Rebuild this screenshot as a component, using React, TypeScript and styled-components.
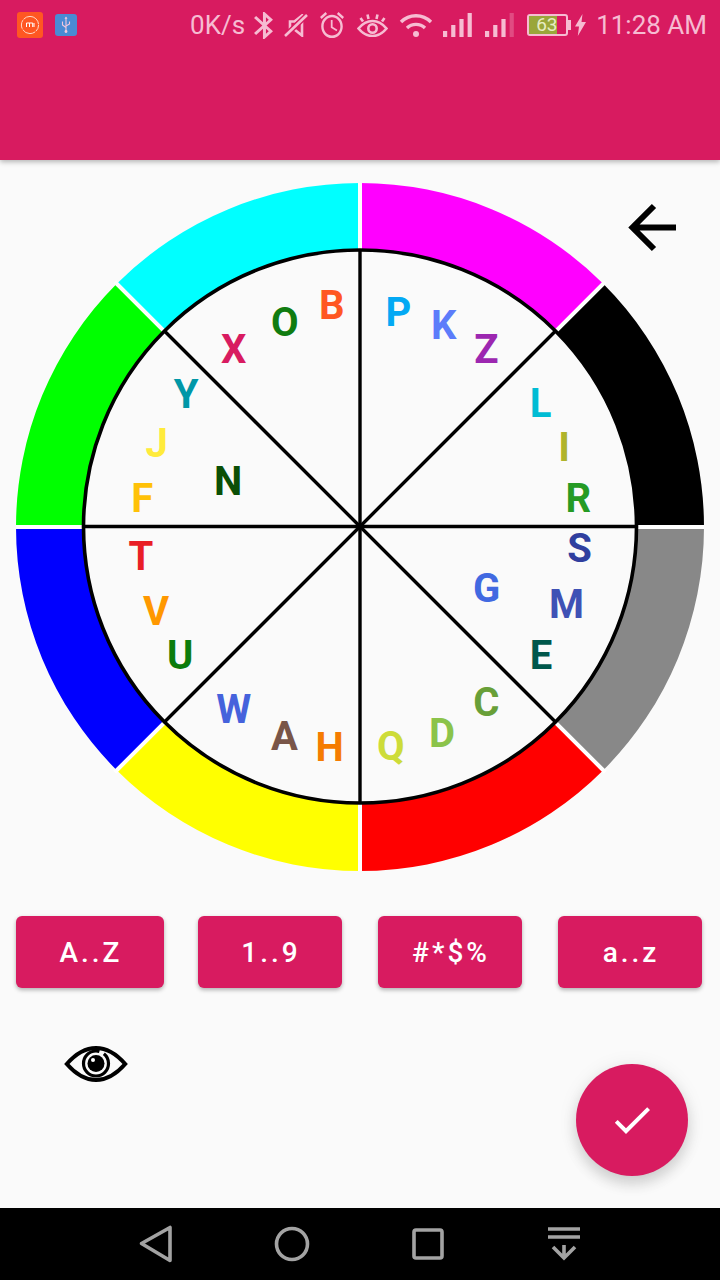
import React from "react";
import styled, { createGlobalStyle } from "styled-components";

const Global = createGlobalStyle`
  html, body { margin: 0; padding: 0; background: #fafafa; }
  * { box-sizing: border-box; }
  body { font-family: Roboto, "Liberation Sans", sans-serif; }
`;

const PINK = "#d81b60";
const STATUS = "#f6bcd2";

const Page = styled.div`
  width: 720px;
  height: 1280px;
  display: flex;
  flex-direction: column;
  background: #fafafa;
  overflow: hidden;
`;
const Header = styled.header`
  height: 160px;
  flex: none;
  background: ${PINK};
  box-shadow: 0 2px 5px rgba(0, 0, 0, 0.28);
  position: relative;
  z-index: 1;
`;
const StatusBar = styled.div`
  height: 50px;
  display: flex;
  align-items: center;
  padding: 0 13px 0 17px;
  color: ${STATUS};
`;
const StatusRight = styled.div`
  margin-left: auto;
  display: flex;
  align-items: center;
`;
const StatusText = styled.span<{ $ml?: number }>`
  font-size: 26px;
  line-height: 30px;
  margin-left: ${(p) => p.$ml ?? 0}px;
  white-space: nowrap;
`;
const Glyph = styled.svg<{ $ml?: number }>`
  display: block;
  flex: none;
  margin-left: ${(p) => p.$ml ?? 0}px;
`;
const Battery = styled.div`
  position: relative;
  width: 41px;
  height: 22px;
  margin-left: 13px;
  border: 2px solid ${STATUS};
  border-radius: 3px;
  &::after {
    content: "";
    position: absolute;
    right: -5px;
    top: 4px;
    width: 3px;
    height: 10px;
    background: ${STATUS};
  }
`;
const BatteryFill = styled.div`
  height: 100%;
  width: 28px;
  background: #9aa63a;
`;
const BatteryText = styled.span`
  position: absolute;
  left: 7px;
  top: -1px;
  font-size: 19px;
  line-height: 20px;
  color: #e8ecc4;
`;

const Main = styled.main`
  flex: 1;
  position: relative;
`;
const Wheel = styled.div`
  position: relative;
  width: 688px;
  height: 688px;
  margin: 23px 0 0 16px;
`;
const WheelArt = styled.svg`
  display: block;
`;
const Letter = styled.span<{ $x: number; $y: number; $c: string }>`
  position: absolute;
  left: ${(p) => p.$x - 16}px;
  top: ${(p) => p.$y - 183 + 1.2}px;
  transform: translate(-50%, -50%);
  font-size: 40px;
  line-height: 1;
  font-weight: 700;
  color: ${(p) => p.$c};
`;
const BackArrow = styled.svg`
  position: absolute;
  left: 624px;
  top: 40px;
`;
const ButtonRow = styled.div`
  display: flex;
  margin: 45px 0 0 16px;
`;
const KeyButton = styled.button<{ $w: number; $ml?: number }>`
  width: ${(p) => p.$w}px;
  height: 72px;
  margin-left: ${(p) => p.$ml ?? 0}px;
  border: 0;
  border-radius: 6px;
  background: ${PINK};
  color: #fff;
  font-family: Roboto, sans-serif;
  font-size: 28px;
  font-weight: 500;
  letter-spacing: 3px;
  box-shadow: 0 2px 4px rgba(0, 0, 0, 0.3);
  padding: 0 0 0 2px;
`;
const BottomRow = styled.div`
  display: flex;
  justify-content: space-between;
  align-items: flex-start;
  padding: 58px 32px 0 64px;
`;
const Fab = styled.button`
  width: 112px;
  height: 112px;
  margin-top: 18px;
  border: 0;
  border-radius: 50%;
  background: ${PINK};
  display: flex;
  align-items: center;
  justify-content: center;
  padding: 0;
  box-shadow: 0 8px 14px rgba(0, 0, 0, 0.14), 0 2px 20px rgba(0, 0, 0, 0.08);
`;
const NavBar = styled.nav`
  height: 72px;
  flex: none;
  background: #000;
  display: flex;
  align-items: center;
  gap: 88px;
  padding-left: 132px;
`;

const cx = 344;
const cy = 344;
const R = 344;
const r = 274;
const polar = (rad: number, deg: number) => {
  const a = ((deg - 90) * Math.PI) / 180;
  return [cx + rad * Math.cos(a), cy + rad * Math.sin(a)];
};
const sector = (a0: number, a1: number) => {
  const [x0, y0] = polar(R, a0);
  const [x1, y1] = polar(R, a1);
  const [x2, y2] = polar(r, a1);
  const [x3, y3] = polar(r, a0);
  return `M${x0} ${y0}A${R} ${R} 0 0 1 ${x1} ${y1}L${x2} ${y2}A${r} ${r} 0 0 0 ${x3} ${y3}Z`;
};
const ring = ["#ff00ff", "#000000", "#888888", "#ff0000", "#ffff00", "#0000ff", "#00ff00", "#00ffff"];

const letters: [string, number, number, string][] = [
  ["B", 331.7, 304.7, "#ff5722"],
  ["O", 284.8, 322, "#107c10"],
  ["X", 233.8, 348.5, "#d81b60"],
  ["Y", 186.2, 393.5, "#0097a7"],
  ["J", 156.7, 443, "#ffeb3b"],
  ["F", 142.2, 497.7, "#ffc107"],
  ["N", 228, 480.5, "#0b4f06"],
  ["P", 398.3, 312.2, "#03a9f4"],
  ["K", 443.7, 324.5, "#5c7cfa"],
  ["Z", 486.3, 348.5, "#9c27b0"],
  ["L", 540.5, 402.8, "#00bcd4"],
  ["I", 564, 446.5, "#afb42b"],
  ["R", 578.3, 497.7, "#259b24"],
  ["T", 141, 555.8, "#e91e26"],
  ["V", 156.2, 610.5, "#ff9800"],
  ["U", 180.2, 655, "#0c7c0c"],
  ["W", 233.7, 708.7, "#4562dc"],
  ["A", 284.5, 735.5, "#795548"],
  ["H", 329.5, 746.7, "#f57c00"],
  ["S", 579.5, 548, "#303f9f"],
  ["G", 486.7, 588, "#4169e1"],
  ["M", 566.5, 603.8, "#3f51b5"],
  ["E", 541, 654.8, "#00574b"],
  ["C", 486.3, 701.3, "#689f38"],
  ["D", 442, 732.8, "#8bc34a"],
  ["Q", 390.8, 746.2, "#cddc39"],
];

const keys: [string, number, number][] = [
  ["A..Z", 148, 0],
  ["1..9", 144, 34],
  ["#*$%", 144, 36],
  ["a..z", 144, 36],
];

const Bars = ({ ml, faded }: { ml: number; faded?: boolean }) => (
  <Glyph $ml={ml} width="29" height="24" viewBox="0 0 29 24">
    <rect x="0" y="18" width="4.2" height="6" fill={STATUS} />
    <rect x="8.2" y="12" width="4.2" height="12" fill={STATUS} />
    <rect x="16.4" y="6" width="4.2" height="18" fill={STATUS} />
    <rect x="24.6" y="0" width="4.2" height="24" fill={STATUS} fillOpacity={faded ? 0.3 : 1} />
  </Glyph>
);

export default function App() {
  const ic = 276.5;
  const iy = 343.5;
  const d = ic * Math.SQRT1_2;
  const gap = R * Math.SQRT1_2 + 2;
  return (
    <Page>
      <Global />
      <Header>
        <StatusBar>
          <Glyph width="26" height="26" viewBox="0 0 26 26">
            <rect width="26" height="26" rx="3" fill="#ff5722" />
            <circle cx="13" cy="13" r="8.6" fill="none" stroke="#ffd9c9" strokeWidth="1" strokeDasharray="7 1 14 1 9 1 20" />
            <path d="M9.5 15v-4h6.2v4M12.5 11v4M17 11v4" fill="none" stroke="#fff" strokeWidth="1" />
          </Glyph>
          <Glyph $ml={12} width="22" height="22" viewBox="0 0 22 22">
            <rect width="22" height="22" rx="3" fill="#4a8bd4" />
            <path d="M11 3.5V18.5M7.5 7.5V11L11 13.5M14.5 7.5V10L11 12" fill="none" stroke="#f2c8de" strokeWidth="1.1" />
            <circle cx="11" cy="17.5" r="1.4" fill="#f2c8de" />
            <path d="M11 2.5l1.5 2.2h-3z" fill="#f2c8de" />
          </Glyph>
          <StatusRight>
            <StatusText>0K/s</StatusText>
            <Glyph $ml={9} width="19" height="27" viewBox="5 2 12.71 20" preserveAspectRatio="none">
              <path fill={STATUS} d="M17.71 7.71L12 2h-1v7.59L6.41 5 5 6.41 10.59 12 5 17.59 6.41 19 11 14.41V22h1l5.71-5.71-4.3-4.29 4.3-4.29zM13 5.83l1.88 1.88L13 9.59V5.83zm1.88 10.46L13 18.17v-3.76l1.88 1.88z" />
            </Glyph>
            <Glyph $ml={11} width="24" height="23" viewBox="0 0 24 23">
              <path d="M6 7.5H10.5L18 1.5V21.5L10.5 15.5H6Z" fill="none" stroke={STATUS} strokeWidth="2.6" />
              <path d="M1 22L23 1" stroke={PINK} strokeWidth="5.5" />
              <path d="M1 22L23 1" stroke={STATUS} strokeWidth="2.6" />
            </Glyph>
            <Glyph $ml={12} width="24" height="26" viewBox="2 1.86 20 20.14" preserveAspectRatio="none">
              <path fill={STATUS} d="M22 5.72l-4.6-3.86-1.29 1.53 4.6 3.86L22 5.72zM7.88 3.39L6.6 1.86 2 5.71l1.29 1.53 4.59-3.85zM12.5 8H11v6l4.75 2.85.75-1.23-4-2.37V8zM12 4c-4.97 0-9 4.03-9 9s4.03 9 9 9 9-4.03 9-9-4.03-9-9-9zm0 16c-3.87 0-7-3.13-7-7s3.13-7 7-7 7 3.13 7 7-3.13 7-7 7z" />
            </Glyph>
            <Glyph $ml={13} width="31" height="24" viewBox="0 0 31 24">
              <path d="M1.5 15.5C6 10 10.5 8 15.5 8S25 10 29.5 15.5C25 21 20.5 23 15.5 23S6 21 1.5 15.5Z" fill="none" stroke={STATUS} strokeWidth="2.6" />
              <circle cx="15.5" cy="15.5" r="4.2" fill="none" stroke={STATUS} strokeWidth="2.6" />
              <path d="M6 8.5L3.5 5M11.5 6L10.5 1.5M19.5 6L20.5 1.5M25 8.5L27.5 5" stroke={STATUS} strokeWidth="2.6" fill="none" />
            </Glyph>
            <Glyph $ml={11} width="34" height="24" viewBox="0 0 34 24">
              <path d="M2 9A21 21 0 0 1 32 9M8 15A13 13 0 0 1 26 15" fill="none" stroke={STATUS} strokeWidth="3.4" />
              <circle cx="17" cy="21" r="3" fill={STATUS} />
            </Glyph>
            <Bars ml={10} />
            <Bars ml={13} faded />
            <Battery>
              <BatteryFill />
              <BatteryText>63</BatteryText>
            </Battery>
            <Glyph $ml={7} width="11" height="22" viewBox="0 0 11 22">
              <path d="M7.5 0L0 12.5H4L2.8 22L11 8H6.5Z" fill={STATUS} />
            </Glyph>
            <StatusText $ml={10}>11:28 AM</StatusText>
          </StatusRight>
        </StatusBar>
      </Header>
      <Main>
        <Wheel>
          <WheelArt width="688" height="688" viewBox="0 0 688 688">
            {ring.map((c, i) => (
              <path key={c} d={sector(i * 45, (i + 1) * 45)} fill={c} />
            ))}
            <g stroke="#ffffff" strokeWidth="4">
              <path d={`M${cx} 0V${2 * cy}M0 ${cy}H${2 * cx}`} />
              <path d={`M${cx - gap} ${cy - gap}L${cx + gap} ${cy + gap}M${cx - gap} ${cy + gap}L${cx + gap} ${cy - gap}`} />
            </g>
            <circle cx={cx} cy={iy} r={ic} fill="#fafafa" stroke="#000" strokeWidth="3.6" />
            <g stroke="#000" strokeWidth="3.4">
              <path d={`M${cx} ${iy - ic}V${iy + ic}M${cx - ic} ${iy}H${cx + ic}`} />
              <path d={`M${cx - d} ${iy - d}L${cx + d} ${iy + d}M${cx - d} ${iy + d}L${cx + d} ${iy - d}`} />
            </g>
          </WheelArt>
          {letters.map(([t, x, y, c]) => (
            <Letter key={t} $x={x} $y={y} $c={c}>
              {t}
            </Letter>
          ))}
        </Wheel>
        <BackArrow width="56" height="56" viewBox="0 0 56 56">
          <path d="M30 6L8.5 27.5L30 49M8.5 27.5H52" fill="none" stroke="#000" strokeWidth="6" />
        </BackArrow>
        <ButtonRow>
          {keys.map(([t, w, ml]) => (
            <KeyButton key={t} $w={w} $ml={ml}>
              {t}
            </KeyButton>
          ))}
        </ButtonRow>
        <BottomRow>
          <Glyph width="64" height="36" viewBox="0 0 64 36">
            <path d="M2.8 18C12 7.5 22 2 32 2S52 7.5 61.2 18C52 28.5 42 34 32 34S12 28.5 2.8 18Z" fill="none" stroke="#000" strokeWidth="4" />
            <circle cx="32" cy="17.5" r="12.5" fill="none" stroke="#000" strokeWidth="3.2" strokeDasharray="62 5 12" />
            <circle cx="32" cy="17.5" r="8.5" fill="#000" />
            <circle cx="29" cy="14" r="2" fill="#fff" />
          </Glyph>
          <Fab>
            <svg width="48" height="48" viewBox="0 0 24 24">
              <path fill="#fff" d="M9 16.17L4.83 12l-1.42 1.41L9 19 21 7l-1.41-1.41z" />
            </svg>
          </Fab>
        </BottomRow>
      </Main>
      <NavBar>
        <svg width="48" height="48" viewBox="0 0 48 48">
          <path d="M9.5 23.5L38 7.5V40.5Z" fill="none" stroke="#a3a3a3" strokeWidth="3.6" strokeLinejoin="round" />
        </svg>
        <svg width="48" height="48" viewBox="0 0 48 48">
          <circle cx="24" cy="24" r="15.5" fill="none" stroke="#a3a3a3" strokeWidth="3.6" />
        </svg>
        <svg width="48" height="48" viewBox="0 0 48 48">
          <rect x="10" y="10" width="28" height="28" rx="2" fill="none" stroke="#a3a3a3" strokeWidth="3.6" />
        </svg>
        <svg width="48" height="48" viewBox="0 0 48 48">
          <path d="M8 7.2h32v3.6H8zM8 15.2h32v3.6H8z" fill="#a3a3a3" />
          <path d="M24 25V38M13 27L24 38L35 27" fill="none" stroke="#a3a3a3" strokeWidth="3.6" />
        </svg>
      </NavBar>
    </Page>
  );
}
